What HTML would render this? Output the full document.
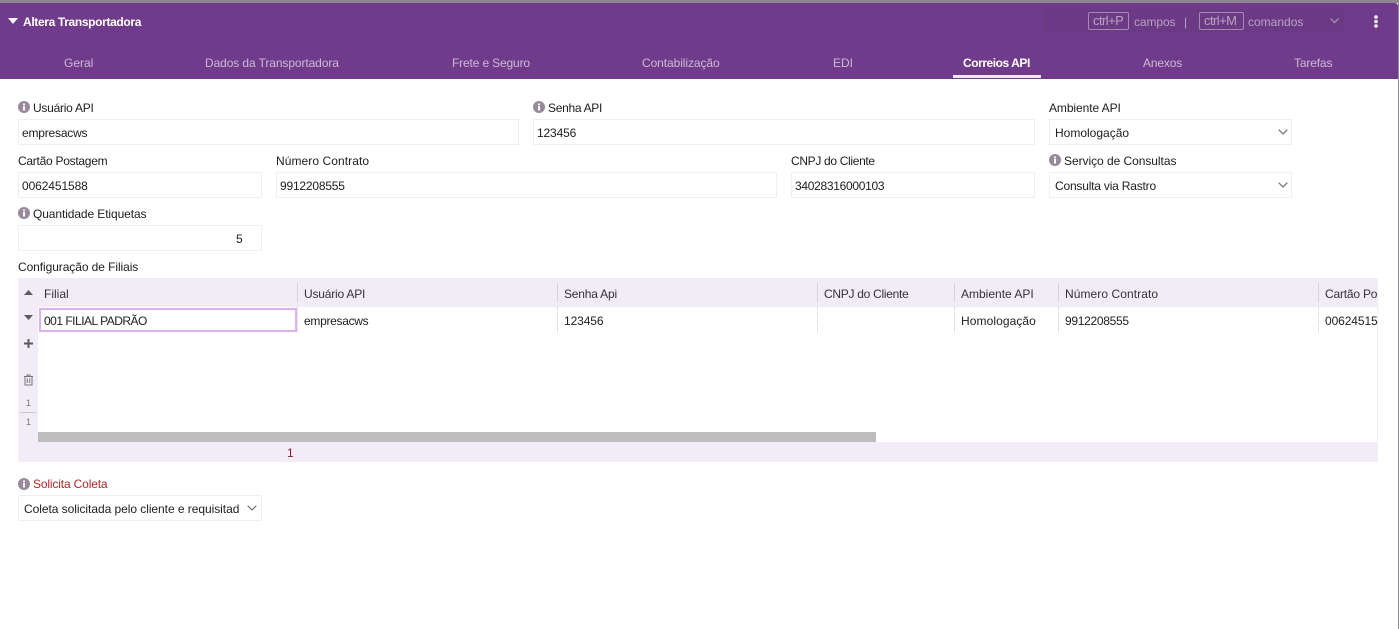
<!DOCTYPE html>
<html lang="pt-BR">
<head>
<meta charset="utf-8">
<title>Altera Transportadora</title>
<style>
html,body{margin:0;padding:0;width:1399px;height:629px;overflow:hidden;background:#fff}
body{position:relative;font-family:"Liberation Sans",sans-serif;font-size:12px;color:#202020}
div,span,svg{position:absolute;box-sizing:border-box}
.t{white-space:nowrap;line-height:16px;height:16px}
#strip{left:0;top:0;width:1399px;height:3px;background:#908592}
#edge{left:1398px;top:0;width:1px;height:629px;background:#8f8a92}
#head{left:0;top:3px;width:1398px;height:76px;background:#713b8b;border-top-right-radius:3px}
.tab{top:55px;color:#cdb9d6;font-size:12px}
.box{background:#fff;border:1px solid #eeeef7;height:26px}
.in{white-space:nowrap;line-height:24px;left:3px;top:1px;color:#202020}
.i{width:12px;height:12px}
.hd{top:286px;color:#333}
.sep{top:283px;width:1px;height:19px;background:#d8d2dc}
.dot{top:307px;height:26px;width:0;border-left:1px dotted #cfcfcf}
.cell{top:313px;color:#202020}
</style>
</head>
<body>
<div id="strip"></div>
<div id="head"></div>
<div id="edge"></div>

<svg style="left:8px;top:18px" width="10" height="6" viewBox="0 0 10 6"><path d="M0 0h10L5 6z" fill="#fff"/></svg>
<span class="t" style="left:23px;top:14px;color:#fff;font-weight:bold;font-size:12px;letter-spacing:-.35px">Altera Transportadora</span>

<div style="left:1044px;top:9px;width:300px;height:24px;background:#6c3a84;border-radius:3px"></div>
<div style="left:1088px;top:12px;width:41px;height:18px;border:1px solid #a48bb4;border-radius:2px"></div>
<span class="t" style="left:1093px;top:13px;color:#b7a2c4;font-size:13px;letter-spacing:-.55px">ctrl+P</span>
<span class="t" style="left:1134px;top:14px;color:#b7a2c4;letter-spacing:-.1px">campos</span>
<span class="t" style="left:1184px;top:14px;color:#b7a2c4">|</span>
<div style="left:1199px;top:12px;width:45px;height:18px;border:1px solid #a48bb4;border-radius:2px"></div>
<span class="t" style="left:1204px;top:13px;color:#b7a2c4;font-size:13px;letter-spacing:-.55px">ctrl+M</span>
<span class="t" style="left:1248px;top:14px;color:#b7a2c4">comandos</span>
<svg style="left:1330px;top:18px" width="9" height="6" viewBox="0 0 9 6"><path d="M.5.5l4 4 4-4" fill="none" stroke="#a48bb4" stroke-width="1.4"/></svg>
<svg style="left:1373px;top:15px" width="6" height="13" viewBox="0 0 6 13"><circle cx="3" cy="2" r="1.8" fill="#fff"/><circle cx="3" cy="6.5" r="1.8" fill="#fff"/><circle cx="3" cy="11" r="1.8" fill="#fff"/></svg>

<span class="t tab" style="left:64px">Geral</span>
<span class="t tab" style="left:205px;letter-spacing:-.1px">Dados da Transportadora</span>
<span class="t tab" style="left:452px;letter-spacing:-.15px">Frete e Seguro</span>
<span class="t tab" style="left:642px;letter-spacing:-.08px">Contabilização</span>
<span class="t tab" style="left:833px">EDI</span>
<span class="t tab" style="left:963px;color:#fff;font-weight:bold;letter-spacing:-.45px">Correios API</span>
<div style="left:953px;top:75px;width:88px;height:3px;background:#f0e6f6"></div>
<span class="t tab" style="left:1143px;letter-spacing:-.15px">Anexos</span>
<span class="t tab" style="left:1294px;letter-spacing:-.15px">Tarefas</span>

<svg class="i" style="left:18px;top:101px" viewBox="0 0 12 12"><circle cx="6" cy="6" r="6" fill="#968a9c"/><rect x="5" y="5" width="2" height="4.5" fill="#fff"/><rect x="5" y="2.5" width="2" height="1.7" fill="#fff"/></svg>
<span class="t" style="left:33px;top:100px;letter-spacing:-.25px">Usuário API</span>
<div class="box" style="left:18px;top:119px;width:501px"><span class="in" style="letter-spacing:-.2px">empresacws</span></div>

<svg class="i" style="left:533px;top:101px" viewBox="0 0 12 12"><circle cx="6" cy="6" r="6" fill="#968a9c"/><rect x="5" y="5" width="2" height="4.5" fill="#fff"/><rect x="5" y="2.5" width="2" height="1.7" fill="#fff"/></svg>
<span class="t" style="left:548px;top:100px;letter-spacing:-.3px">Senha API</span>
<div class="box" style="left:533px;top:119px;width:502px"><span class="in" style="letter-spacing:-.15px">123456</span></div>

<span class="t" style="left:1049px;top:100px;letter-spacing:-.08px">Ambiente API</span>
<div class="box" style="left:1049px;top:119px;width:243px"><span class="in" style="left:5px">Homologação</span>
<svg style="left:228px;top:9px" width="10" height="6" viewBox="0 0 10 6"><path d="M.7.7L5 5l4.3-4.3" fill="none" stroke="#777" stroke-width="1.3"/></svg></div>

<span class="t" style="left:18px;top:153px;letter-spacing:-.27px">Cartão Postagem</span>
<div class="box" style="left:18px;top:172px;width:244px"><span class="in" style="letter-spacing:-.1px">0062451588</span></div>

<span class="t" style="left:276px;top:153px;letter-spacing:.07px">Número Contrato</span>
<div class="box" style="left:276px;top:172px;width:501px"><span class="in" style="letter-spacing:-.2px">9912208555</span></div>

<span class="t" style="left:791px;top:153px;letter-spacing:-.33px">CNPJ do Cliente</span>
<div class="box" style="left:791px;top:172px;width:244px"><span class="in" style="letter-spacing:-.3px">34028316000103</span></div>

<svg class="i" style="left:1049px;top:154px" viewBox="0 0 12 12"><circle cx="6" cy="6" r="6" fill="#968a9c"/><rect x="5" y="5" width="2" height="4.5" fill="#fff"/><rect x="5" y="2.5" width="2" height="1.7" fill="#fff"/></svg>
<span class="t" style="left:1064px;top:153px;letter-spacing:-.05px">Serviço de Consultas</span>
<div class="box" style="left:1049px;top:172px;width:243px"><span class="in" style="left:5px;letter-spacing:-.2px">Consulta via Rastro</span>
<svg style="left:228px;top:9px" width="10" height="6" viewBox="0 0 10 6"><path d="M.7.7L5 5l4.3-4.3" fill="none" stroke="#777" stroke-width="1.3"/></svg></div>

<svg class="i" style="left:18px;top:207px" viewBox="0 0 12 12"><circle cx="6" cy="6" r="6" fill="#968a9c"/><rect x="5" y="5" width="2" height="4.5" fill="#fff"/><rect x="5" y="2.5" width="2" height="1.7" fill="#fff"/></svg>
<span class="t" style="left:33px;top:206px;letter-spacing:-.1px">Quantidade Etiquetas</span>
<div class="box" style="left:18px;top:225px;width:244px"><span class="in" style="left:217px">5</span></div>

<span class="t" style="left:18px;top:259px;letter-spacing:-.08px">Configuração de Filiais</span>

<div style="left:18px;top:278px;width:1360px;height:184px;background:#f2ecf7;border-radius:2px"></div>
<div style="left:38px;top:307px;width:1339px;height:135px;background:#fff"></div>
<div style="left:38px;top:432px;width:838px;height:10px;background:#bdbdbd"></div>

<svg style="left:24px;top:290px" width="9" height="5" viewBox="0 0 9 5"><path d="M0 5L4.5 0 9 5z" fill="#5f5a66"/></svg>
<svg style="left:24px;top:315px" width="9" height="5" viewBox="0 0 9 5"><path d="M0 0L9 0 4.500 5z" fill="#5f5a66"/></svg>
<svg style="left:23px;top:338px" width="11" height="11" viewBox="0 0 11 11"><path d="M5.500 1v9M1 5.500h9" stroke="#5a5a62" stroke-width="2"/></svg>
<svg style="left:23px;top:374px" width="11" height="12" viewBox="0 0 11 12"><path d="M1 2.500h9M4 2.500V1h3v1.500M2 2.500V11h7V2.500M4.300 4.500v4.500M6.700 4.500v4.500" fill="none" stroke="#77727c" stroke-width="1"/></svg>
<span class="t" style="left:26px;top:395px;font-size:9px;color:#777">1</span>
<div style="left:20px;top:412px;width:16px;height:1px;background:#c9c3cf"></div>
<span class="t" style="left:26px;top:414px;font-size:9px;color:#777">1</span>

<span class="t hd" style="left:44px">Filial</span>
<span class="t hd" style="left:304px;letter-spacing:-.2px">Usuário API</span>
<span class="t hd" style="left:564px;letter-spacing:-.2px">Senha Api</span>
<span class="t hd" style="left:824px;letter-spacing:-.28px">CNPJ do Cliente</span>
<span class="t hd" style="left:961px">Ambiente API</span>
<span class="t hd" style="left:1065px;letter-spacing:.07px">Número Contrato</span>
<span class="t hd" style="left:1325px;letter-spacing:-.2px">Cartão Po</span>
<div class="sep" style="left:297px"></div>
<div class="sep" style="left:557px"></div>
<div class="sep" style="left:817px"></div>
<div class="sep" style="left:954px"></div>
<div class="sep" style="left:1058px"></div>
<div class="sep" style="left:1318px"></div>

<div style="left:39px;top:308px;width:258px;height:24px;border:2px solid #dcb0f5;background:#fff"></div>
<span class="t cell" style="left:44px;letter-spacing:-.5px">001 FILIAL PADRÃO</span>
<span class="t cell" style="left:304px;letter-spacing:-.3px">empresacws</span>
<span class="t cell" style="left:564px;letter-spacing:-.1px">123456</span>
<span class="t cell" style="left:961px;letter-spacing:.08px">Homologação</span>
<span class="t cell" style="left:1065px;letter-spacing:-.3px">9912208555</span>
<span class="t cell" style="left:1325px;letter-spacing:-.1px">00624515</span>
<div class="dot" style="left:297px"></div>
<div class="dot" style="left:557px"></div>
<div class="dot" style="left:817px"></div>
<div class="dot" style="left:954px"></div>
<div class="dot" style="left:1058px"></div>
<div class="dot" style="left:1318px"></div>

<span class="t" style="left:287px;top:445px;color:#8b1f2a">1</span>

<svg class="i" style="left:18px;top:478px" viewBox="0 0 12 12"><circle cx="6" cy="6" r="6" fill="#968a9c"/><rect x="5" y="5" width="2" height="4.5" fill="#fff"/><rect x="5" y="2.5" width="2" height="1.7" fill="#fff"/></svg>
<span class="t" style="left:33px;top:476px;color:#b02a2a;letter-spacing:-.15px">Solicita Coleta</span>
<div class="box" style="left:18px;top:495px;width:244px;overflow:hidden"><span class="in" style="left:5px;letter-spacing:-.05px">Coleta solicitada pelo cliente e requisitad</span>
<svg style="left:228px;top:9px" width="10" height="6" viewBox="0 0 10 6"><path d="M.7.7L5 5l4.3-4.3" fill="none" stroke="#777" stroke-width="1.3"/></svg></div>
</body>
</html>
